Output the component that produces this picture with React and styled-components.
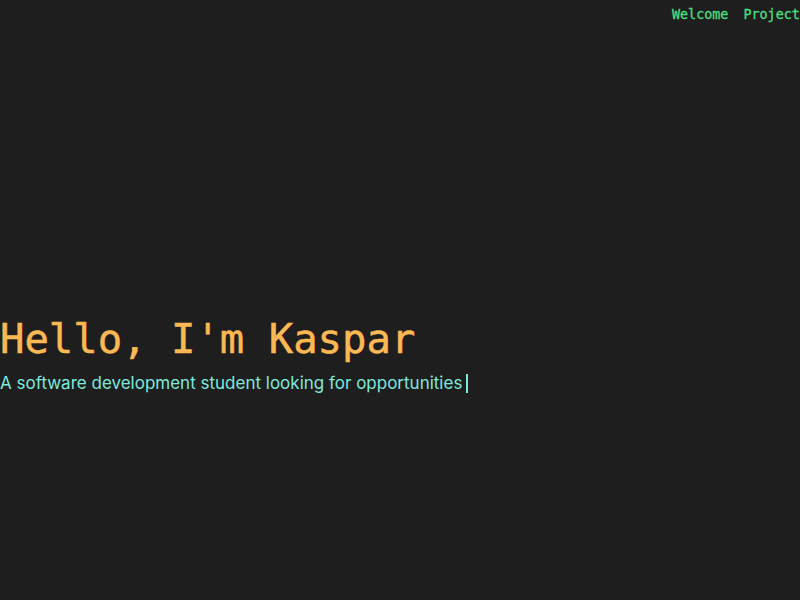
import React from "react";
import styled, { createGlobalStyle } from "styled-components";

const GlobalStyle = createGlobalStyle`
  html, body {
    margin: 0;
    padding: 0;
    background: #1e1e1e;
    overflow: hidden;
  }
`;

const Page = styled.div`
  width: 800px;
  height: 600px;
  display: flex;
  flex-direction: column;
  background: #1e1e1e;
  overflow: hidden;
`;

const Header = styled.header`
  display: flex;
  padding: 7px 0 0 672px;
  height: 30px;
  box-sizing: border-box;
`;

const Nav = styled.nav`
  display: flex;
  gap: 15px;
  white-space: nowrap;
`;

const NavLink = styled.a`
  font-family: "DejaVu Sans Mono", monospace;
  font-size: 13.4px;
  color: #4ade80;
  text-decoration: none;
  -webkit-text-stroke: 0.3px #4ade80;
`;

const Hero = styled.section`
  display: flex;
  flex-direction: column;
  padding-top: 285px;
`;

const Title = styled.h1`
  margin: 0;
  font-family: "DejaVu Sans Mono", monospace;
  font-weight: normal;
  font-size: 40.6px;
  line-height: 48px;
  color: #fbb954;
  -webkit-text-stroke: 0.5px #fbb954;
`;

const Subtitle = styled.p`
  margin: 8px 0 0;
  font-family: "Inter", sans-serif;
  font-size: 17px;
  line-height: 24px;
  color: #7ee8dc;
  display: flex;
  align-items: center;
`;

const Caret = styled.span`
  display: inline-block;
  width: 2px;
  height: 19px;
  margin-left: 4px;
  background: #7ee8dc;
`;

export default function App() {
  return (
    <>
      <GlobalStyle />
      <Page>
        <Header>
          <Nav>
            <NavLink href="#">Welcome</NavLink>
            <NavLink href="#">Projects</NavLink>
          </Nav>
        </Header>
        <Hero>
          <Title>Hello, I'm Kaspar</Title>
          <Subtitle>
            A software development student looking for opportunities
            <Caret />
          </Subtitle>
        </Hero>
      </Page>
    </>
  );
}
